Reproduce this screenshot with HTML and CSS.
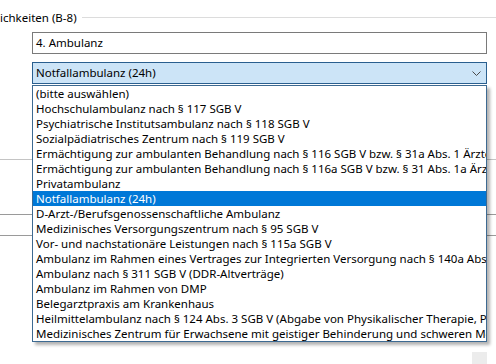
FILE: index.html
```html
<!DOCTYPE html>
<html lang="de">
<head>
<meta charset="utf-8">
<title>Ambulanz</title>
<link rel="stylesheet" href="styles.css">
</head>
<body>
<div class="form">
  <div class="group-head">
    <span class="group-title">ichkeiten (B-8)</span>
    <span class="group-rule"></span>
  </div>
  <div class="textbox">4. Ambulanz</div>
  <div class="combo">
    <span class="combo-value">Notfallambulanz (24h)</span>
    <svg class="chevron" width="9" height="5" viewBox="0 0 9 5"><path d="M0.5 0.5 L4.5 4.5 L8.5 0.5" fill="none" stroke="#4a4a4a" stroke-width="1"/></svg>
  </div>
  <div class="under">
    <div class="rule rule-a"></div>
    <div class="rule rule-b"></div>
    <div class="rule rule-c"></div>
    <div class="button-row"><div class="button-stub"></div></div>
  </div>
  <ul class="dropdown">
    <li>(bitte auswählen)</li>
    <li>Hochschulambulanz nach § 117 SGB V</li>
    <li>Psychiatrische Institutsambulanz nach § 118 SGB V</li>
    <li>Sozialpädiatrisches Zentrum nach § 119 SGB V</li>
    <li>Ermächtigung zur ambulanten Behandlung nach § 116 SGB V bzw. § 31a Abs. 1 Ärzte-ZV</li>
    <li>Ermächtigung zur ambulanten Behandlung nach § 116a SGB V bzw. § 31 Abs. 1a Ärzte-ZV</li>
    <li>Privatambulanz</li>
    <li class="selected">Notfallambulanz (24h)</li>
    <li>D-Arzt-/Berufsgenossenschaftliche Ambulanz</li>
    <li>Medizinisches Versorgungszentrum nach § 95 SGB V</li>
    <li>Vor- und nachstationäre Leistungen nach § 115a SGB V</li>
    <li>Ambulanz im Rahmen eines Vertrages zur Integrierten Versorgung nach § 140a Abs. 1 SGB V</li>
    <li>Ambulanz nach § 311 SGB V (DDR-Altverträge)</li>
    <li>Ambulanz im Rahmen von DMP</li>
    <li>Belegarztpraxis am Krankenhaus</li>
    <li>Heilmittelambulanz nach § 124 Abs. 3 SGB V (Abgabe von Physikalischer Therapie, Podologischer Therapie)</li>
    <li>Medizinisches Zentrum für Erwachsene mit geistiger Behinderung und schweren Mehrfachbehinderungen</li>
  </ul>
</div>
</body>
</html>
```

FILE: styles.css
```css
html, body {
  margin: 0;
  padding: 0;
  background: #ffffff;
}

body {
  font-family: "Noto Sans", "Open Sans", sans-serif;
  font-size: 11.5px;
  color: #000000;
  overflow: hidden;
  width: 496px;
  height: 364px;
}

.form {
  position: relative;
  width: 496px;
  height: 364px;
  padding-top: 10px;
  box-sizing: border-box;
}

.group-head {
  display: flex;
  align-items: center;
  height: 15px;
  line-height: 15px;
}

.group-title {
  white-space: nowrap;
}

.group-rule {
  flex: 1;
  height: 1px;
  background: #dcdcdc;
  margin-left: 5px;
}

.textbox {
  box-sizing: border-box;
  margin: 7px 0 0 32px;
  width: 455px;
  height: 22px;
  border: 1px solid #7a7a7a;
  padding-left: 3px;
  line-height: 20px;
}

.combo {
  box-sizing: border-box;
  display: flex;
  align-items: center;
  justify-content: space-between;
  margin: 8px 0 0 32px;
  width: 455px;
  height: 22px;
  border: 1px solid #2a5f8f;
  background: #cce4f7;
  padding: 0 5px 0 3px;
  line-height: 20px;
}

.chevron {
  display: block;
}

.under {
  display: flex;
  flex-direction: column;
}

.rule {
  height: 1px;
}

.rule-a {
  margin-top: 75px;
  background: #c4c4c4;
}

.rule-b {
  margin-top: 54px;
  background: #9a9a9a;
}

.rule-c {
  margin-top: 20px;
  background: #9a9a9a;
}

.button-row {
  display: flex;
  justify-content: flex-end;
  padding-right: 9px;
  margin-top: 116px;
}

.button-stub {
  width: 15px;
  height: 12px;
  background: #ececec;
}

.dropdown {
  position: absolute;
  top: 85px;
  left: 32px;
  box-sizing: border-box;
  width: 455px;
  margin: 0;
  padding: 0;
  list-style: none;
  border: 1px solid #3d6a92;
  background: #ffffff;
  box-shadow: 3px 3px 3px rgba(0, 0, 0, 0.3);
  overflow: hidden;
}

.dropdown li {
  height: 15px;
  line-height: 15px;
  padding-left: 3px;
  white-space: nowrap;
  overflow: hidden;
}

.dropdown li.selected {
  background: #0078d7;
  color: #ffffff;
}
```
